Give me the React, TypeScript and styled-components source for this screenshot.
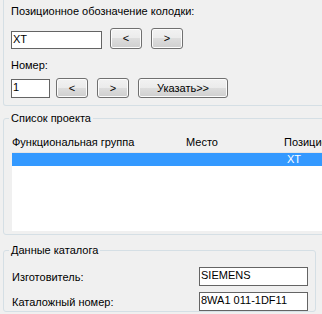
import React from "react";
import styled, { createGlobalStyle } from "styled-components";

const GlobalStyle = createGlobalStyle`
  html, body {
    margin: 0;
    padding: 0;
    overflow: hidden;
    background: #f0f0f0;
  }
  body {
    font-family: "Liberation Sans", Arial, sans-serif;
    font-size: 11px;
    color: #000;
  }
`;

const Page = styled.div`
  width: 340px;
  height: 314px;
  padding-left: 3px;
  box-sizing: border-box;
  display: flex;
  flex-direction: column;
`;

const TopGroup = styled.section`
  height: 106px;
  box-sizing: border-box;
  border: 1px solid #d5dfe5;
  border-top: none;
  border-radius: 0 0 3px 3px;
  padding: 5px 0 0 7px;
  display: flex;
  flex-direction: column;
`;

const Label = styled.div<{ $top?: number }>`
  line-height: 13px;
  height: 13px;
  margin-top: ${(p) => p.$top ?? 0}px;
  white-space: nowrap;
`;

const Row = styled.div<{ $top: number }>`
  display: flex;
  align-items: flex-end;
  margin-top: ${(p) => p.$top}px;
`;

const TextBox = styled.div<{ $w: number; $h?: number; $ml?: number }>`
  width: ${(p) => p.$w}px;
  height: ${(p) => p.$h ?? 19}px;
  margin-left: ${(p) => p.$ml ?? 0}px;
  box-sizing: border-box;
  border: 1px solid #646464;
  background: #fff;
  padding: 1px 1px 0 1px;
  line-height: 13px;
  white-space: nowrap;
  overflow: hidden;
`;

const Button = styled.div<{ $w: number; $h?: number; $ml: number }>`
  width: ${(p) => p.$w}px;
  height: ${(p) => p.$h ?? 21}px;
  margin-left: ${(p) => p.$ml}px;
  box-sizing: border-box;
  border: 1px solid #707070;
  border-radius: 3px;
  background: linear-gradient(#f2f2f2 0%, #ebebeb 50%, #dddddd 50%, #cfcfcf 100%);
  box-shadow: inset 0 0 0 1px #fcfcfc;
  display: flex;
  align-items: center;
  justify-content: center;
  line-height: 13px;
  white-space: nowrap;
`;

const Group = styled.fieldset<{ $top: number; $w: number }>`
  margin: ${(p) => p.$top}px 0 0 0;
  padding: 0;
  width: ${(p) => p.$w}px;
  box-sizing: border-box;
  min-width: 0;
  border: 1px solid #d5dfe5;
  border-radius: 3px;
`;

const Legend = styled.legend`
  margin-left: 5px;
  padding: 0 2px;
  line-height: 13px;
  font-size: 11px;
`;

const ListBody = styled.div`
  padding: 8px 0 3px 8px;
`;

const ListView = styled.div`
  display: flex;
  flex-direction: column;
`;

const Header = styled.div`
  height: 20px;
  box-sizing: border-box;
  border-bottom: 1px solid #e5e5e5;
  display: grid;
  grid-template-columns: 174px 98px 100px;
  line-height: 19px;
  white-space: nowrap;
`;

const Rows = styled.div`
  height: 78px;
  background: #fff;
`;

const DataRow = styled.div<{ $selected?: boolean }>`
  height: 13px;
  display: grid;
  grid-template-columns: 174px 98px 100px;
  line-height: 13px;
  background: ${(p) => (p.$selected ? "#3399ff" : "transparent")};
  color: ${(p) => (p.$selected ? "#fff" : "#000")};
`;

const Cell = styled.div`
  padding-left: 3px;
  white-space: nowrap;
`;

const CatalogBody = styled.div`
  padding: 10px 7px 0 8px;
  display: flex;
  flex-direction: column;
  gap: 6px;
`;

const FieldRow = styled.div`
  display: flex;
  align-items: center;
  justify-content: space-between;
`;

export default function App() {
  return (
    <>
      <GlobalStyle />
      <Page>
        <TopGroup>
          <Label>Позиционное обозначение колодки:</Label>
          <Row $top={10}>
            <TextBox $w={91} $h={18}>XT</TextBox>
            <Button $w={32} $ml={8}>&lt;</Button>
            <Button $w={32} $ml={9}>&gt;</Button>
          </Row>
          <Label $top={10}>Номер:</Label>
          <Row $top={6}>
            <TextBox $w={39}>1</TextBox>
            <Button $w={32} $h={20} $ml={6}>&lt;</Button>
            <Button $w={32} $h={20} $ml={9}>&gt;</Button>
            <Button $w={90} $h={20} $ml={9}>Указать&gt;&gt;</Button>
          </Row>
        </TopGroup>

        <Group $top={6} $w={337}>
          <Legend>Список проекта</Legend>
          <ListBody>
            <ListView>
              <Header>
                <div>Функциональная группа</div>
                <div>Место</div>
                <div>Позиционное обозначение</div>
              </Header>
              <Rows>
                <DataRow $selected>
                  <Cell />
                  <Cell />
                  <Cell>XT</Cell>
                </DataRow>
              </Rows>
            </ListView>
          </ListBody>
        </Group>

        <Group $top={9} $w={313}>
          <Legend>Данные каталога</Legend>
          <CatalogBody>
            <FieldRow>
              <span>Изготовитель:</span>
              <TextBox $w={109}>SIEMENS</TextBox>
            </FieldRow>
            <FieldRow>
              <span>Каталожный номер:</span>
              <TextBox $w={109}>8WA1 011-1DF11</TextBox>
            </FieldRow>
          </CatalogBody>
        </Group>
      </Page>
    </>
  );
}
